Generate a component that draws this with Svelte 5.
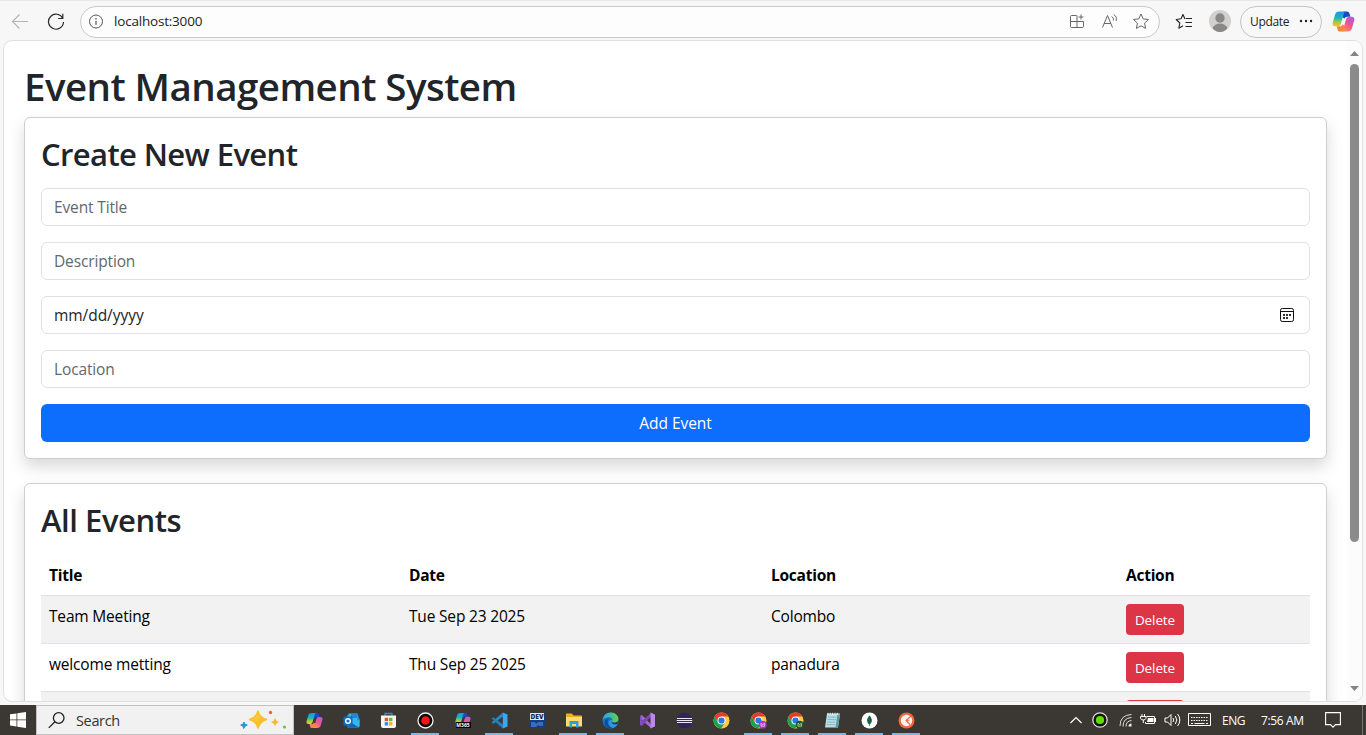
<script>
  const columns = ['Title', 'Date', 'Location', 'Action'];
  const events = [
    { title: 'Team Meeting', date: 'Tue Sep 23 2025', location: 'Colombo', action: 'Delete' },
    { title: 'welcome metting', date: 'Thu Sep 25 2025', location: 'panadura', action: 'Delete' },
    { title: '', date: '', location: '', action: '' }
  ];
  const apps = [
    { icon: 'copilot' }, { icon: 'outlook' }, { icon: 'store' },
    { icon: 'record', open: true }, { icon: 'm365' }, { icon: 'vscode', open: true },
    { icon: 'dev' }, { icon: 'folder', open: true }, { icon: 'edge', open: true },
    { icon: 'vs' }, { icon: 'eclipse' }, { icon: 'chrome' },
    { icon: 'chrome', badge: '#a63cc4', open: true }, { icon: 'chrome', badge: '#1d5c1f', open: true },
    { icon: 'notepad', open: true }, { icon: 'mongo', open: true }, { icon: 'postman', open: true }
  ];
</script>

{#snippet copilot(size)}
  <svg width={size} height={size} viewBox="0 0 24 24">
    <path d="M12 1.500h3.500c1.600 0 2.300.8 2.700 2.200l1 3.300h-3.400c-1.500 0-2.300.7-2.800 2.200L10.500 7Z" fill="#1b48c8" />
    <path d="M12 22.500H8.500c-1.600 0-2.300-.8-2.700-2.200l-1-3.300h3.400c1.500 0 2.300-.7 2.800-2.200l2.500 2.200Z" fill="#f8853d" />
    <path d="M7.700 1.500h6.800c-1.200.3-1.800 1.200-2.200 2.500L9.500 13.800C8.800 16.200 7.800 17 6 17H3.500C.9 17 .2 15 .9 12.700l2.300-7.800C3.900 2.600 5.300 1.500 7.700 1.500Z" fill="url(#cpA)" />
    <path d="M16.300 22.500H9.500c1.200-.3 1.800-1.200 2.200-2.500l2.800-9.800C15.200 7.800 16.200 7 18 7h2.500c2.600 0 3.300 2 2.600 4.300l-2.300 7.800c-.7 2.300-2.100 3.400-4.500 3.400Z" fill="url(#cpB)" />
  </svg>
{/snippet}

{#snippet appIcon(name, badge)}
  {#if name === 'copilot'}
    {@render copilot(17)}
  {:else if name === 'outlook'}
    <svg width="17" height="17" viewBox="0 0 17 17">
      <path d="M4 3h11l1.500 4v7.500H4Z" fill="#1490df" />
      <path d="M5.500 1.500h9V9l-4.500 3-4.500-3Z" fill="#3ab4ee" />
      <path d="M8 1.500h6.500V6H8Z" fill="#1f86d4" />
      <path d="m4 15 12.500-7.500V14q0 1.500-1.500 1.500H5Z" fill="#35b8f1" />
      <path d="m4 8 12 7.500H5Z" fill="#1066b5" />
      <rect x=".5" y="4.500" width="9" height="9" rx="1" fill="#0f6cbd" />
      <circle cx="5" cy="9" r="2.300" fill="none" stroke="#fff" stroke-width="1.400" />
    </svg>
  {:else if name === 'store'}
    <svg width="17" height="17" viewBox="0 0 17 17">
      <path d="M5 4V1.500h7V4" fill="none" stroke="#2a91cc" stroke-width="1.300" />
      <path d="M1 3.500h15v10.500q0 2-2 2H3q-2 0-2-2Z" fill="#f6f6f6" />
      <path d="M4.700 5.800h3.400v3.400H4.700Z" fill="#e8502e" /><path d="M9 5.800h3.400v3.400H9Z" fill="#78b52c" />
      <path d="M4.700 10.100h3.400v3.400H4.700Z" fill="#1e9be0" /><path d="M9 10.100h3.400v3.400H9Z" fill="#f5b51b" />
    </svg>
  {:else if name === 'record'}
    <svg width="17" height="17" viewBox="0 0 17 17">
      <circle cx="8.500" cy="8.500" r="7.500" fill="#080808" stroke="#f2f2f2" stroke-width="1.300" />
      <circle cx="8.500" cy="8.500" r="4.300" fill="#f5141a" />
    </svg>
  {:else if name === 'm365'}
    <span class="m365">
      {@render copilot(16)}
      <b>M365</b>
    </span>
  {:else if name === 'vscode'}
    <svg width="17" height="17" viewBox="0 0 17 17">
      <path d="M12 4.500 2.500 11.800 .5 10.500 11.800.5Z" fill="#2489ca" />
      <path d="M12 12.500 2.500 5.200 .5 6.500l11.300 10Z" fill="#1b80c4" />
      <path d="m11.800.5 4.700 2v12l-4.700 2Z" fill="#3aa7ef" />
    </svg>
  {:else if name === 'dev'}
    <svg width="16" height="17" viewBox="0 0 16 17">
      <path d="M0 1h16v15H0Z" fill="#193d7c" />
      <path d="M1 1h14v7H1Z" fill="#dce8f5" />
      <text x="8" y="7.300" text-anchor="middle" font-size="7" font-weight="900" textLength="13" lengthAdjust="spacingAndGlyphs" fill="#1c2d52">DEV</text>
      <path d="M2 10h4l1 2 2-2h5v4h-3l-2-1-2 2H2Z" fill="#386bc2" />
    </svg>
  {:else if name === 'folder'}
    <svg width="18" height="17" viewBox="0 0 18 17">
      <path d="M1 1.500h6l1.500 2H16q1 0 1 1V14H1Z" fill="#f2ad28" />
      <path d="M1 5h16v9.500H1Z" fill="#ffd976" />
      <path d="M4.500 15.500V9h9v6.500H11v-3.500H7v3.500Z" fill="#399bd3" />
    </svg>
  {:else if name === 'edge'}
    <svg width="17" height="17" viewBox="0 0 17 17">
      <circle cx="8.500" cy="8.500" r="8" fill="#1279c8" />
      <path d="M.6 8C1 3.500 4.500.5 8.700.5c5 0 8 3.500 7.700 6.800-.3 2.600-2.600 3.500-4.800 3.300-1.700-.1-1.900-.8-1.300-1.700.8-1.700-.8-3.700-3.300-3.700C4 5.200 1.700 6 .6 8Z" fill="url(#edgeA)" />
      <path d="M7.300 6.500c-3 2.500-2 7.500 3.700 9.600C6 17.400 2 14.300 2.500 10 2.800 7.700 4.500 6.200 7.300 6.500Z" fill="#0d4f9c" />
      <path d="M10.400 9.300c-1.400 2 2 4 5.300 2.400-1 2-2.700 3.500-4.700 4.400-4.500-1.500-5.800-6-2.500-8 1.200-.3 2 .3 1.900 1.200Z" fill="#2b99df" />
      <path d="M10.300 8.900c-.6 1 0 1.700 1.300 1.700 1.900.2 3.300-.4 4.100-1.400v2.500c-3.200 1.600-7.100.1-5.400-2.800Z" fill="#39352f" />
    </svg>
  {:else if name === 'vs'}
    <svg width="17" height="17" viewBox="0 0 17 17">
      <path d="m1 4 2-1 9 9.500V16L1 6.500Z" fill="#a36bd8" />
      <path d="m1 13 2 1 9-9.500V1L1 10.500Z" fill="#7d45b6" />
      <path d="M1 4h1.800v9.500L1 13Z" fill="#8552be" />
      <path d="m11.500.5 4.500 2v12l-4.500 2Z" fill="#bd86ea" />
    </svg>
  {:else if name === 'eclipse'}
    <svg width="17" height="17" viewBox="0 0 17 17">
      <circle cx="8.500" cy="8.500" r="7.800" fill="#30245c" />
      <path d="M1 6.500h15M.7 8.500h15.600M1 10.500h15" stroke="#ecebf5" stroke-width="1" />
    </svg>
  {:else if name === 'chrome'}
    <svg width="17" height="17" viewBox="0 0 17 17">
      <circle cx="8.500" cy="8.500" r="8" fill="#ffcd40" />
      <path d="M8.500 4.500h7A8 8 0 0 0 1.600 4.500L5 10.500Z" fill="#e33b2e" />
      <path d="M1.600 4.500A8 8 0 0 0 8.200 16.500L12 10.500 5 10.500Z" fill="#1ea052" />
      <circle cx="8.500" cy="8.500" r="4" fill="#fff" />
      <circle cx="8.500" cy="8.500" r="3.100" fill="#2878e8" />
      {#if badge}
        <circle cx="12.700" cy="12.700" r="3.900" fill={badge} />
        <path d="M11 14.200v-3l1.700 1.500 1.700-1.500v3Z" fill="none" stroke="#fff" stroke-opacity=".75" stroke-width=".8" />
      {/if}
    </svg>
  {:else if name === 'notepad'}
    <svg width="17" height="17" viewBox="0 0 17 17">
      <path d="M3 1.500h13l-2 14H1Z" fill="#b9dee6" />
      <path d="M13.500 2.500H16l-2 13h-2.500Z" fill="#5b9aa8" />
      <path d="m4 5 8.500.2M3.700 7.500l8.500.2M3.300 10l8.500.2M3 12.500l8.500.2" stroke="#77afbd" stroke-width=".8" />
      <path d="M4 .8v2M6.300.8v2M8.600.8v2M11 .8v2M13.300.8v2" stroke="#e9f2f3" />
    </svg>
  {:else if name === 'mongo'}
    <svg width="17" height="17" viewBox="0 0 17 17">
      <circle cx="8.500" cy="8.500" r="8" fill="#fff" />
      <path d="M8.500 3.500c3.200 3.500 3.200 6.500 0 9.500-3.200-3-3.200-6 0-9.500ZM8.200 12h.7v2h-.7Z" fill="#176149" />
    </svg>
  {:else}
    <svg width="17" height="17" viewBox="0 0 17 17">
      <circle cx="8.500" cy="8.500" r="8" fill="#ee6841" />
      <circle cx="8.500" cy="8.500" r="5.700" fill="#fff4ee" />
      <path d="m13 4-5 4.500 4 4M8 8.500l3.500-.2" fill="none" stroke="#ee6841" stroke-width="1.100" />
    </svg>
  {/if}
{/snippet}

<svg class="defs" width="0" height="0">
  <defs>
    <linearGradient id="cpA" x1="0" y1="0" x2="0" y2="1">
      <stop offset="0" stop-color="#1597e8" /><stop offset=".45" stop-color="#20b5b8" />
      <stop offset=".7" stop-color="#9bcb45" /><stop offset="1" stop-color="#ffc229" />
    </linearGradient>
    <linearGradient id="cpB" x1="1" y1="0" x2=".2" y2="1">
      <stop offset="0" stop-color="#9b62ef" /><stop offset=".5" stop-color="#ee5295" /><stop offset="1" stop-color="#ff9248" />
    </linearGradient>
    <linearGradient id="edgeA" x1="0" y1="0" x2="1" y2="0">
      <stop offset="0" stop-color="#28a5e7" /><stop offset="1" stop-color="#5ed44b" />
    </linearGradient>
    <linearGradient id="spark" x1="0" y1="0" x2="1" y2="1">
      <stop offset="0" stop-color="#ffdb55" /><stop offset="1" stop-color="#f5ac13" />
    </linearGradient>
  </defs>
</svg>

<div class="screen">
  <header class="toolbar">
    <svg class="back" width="18" height="18" viewBox="0 0 18 18" fill="none" stroke="#b4b4b4" stroke-width="1.100"><path d="M17 8.500H1.500M8.500 1.500l-7 7 7 7" /></svg>
    <svg class="reload" width="18" height="18" viewBox="0 0 18 18" fill="none" stroke="#2b2b2b" stroke-width="1.200"><path d="M15.800 5.500A7.500 7.500 0 1 0 16.500 9M15.800.8v4.700h-4.700" /></svg>
    <div class="address">
      <svg width="16" height="16" viewBox="0 0 16 16" fill="none" stroke="#555"><circle cx="8" cy="7.500" r="6.500" /><path d="M8 6.700v4M8 4.100v1.300" stroke-width="1.200" /></svg>
      <span class="url">localhost:3000</span>
      <svg class="a1" width="16" height="16" viewBox="0 0 16 16" fill="none" stroke="#666"><path d="M7.500 1.500h-5q-1 0-1 1v10q0 1 1 1h11q1 0 1-1v-5h-13M8 1.500v12M12 .5v5M9.500 3h5" /></svg>
      <svg class="a2" width="18" height="16" viewBox="0 0 18 16" fill="none" stroke="#666"><path d="m2.500 13.500 5-12 5 12M4.200 9.500h6.600M11.800 2.500q2 1.300 1.700 4M13.700.5q3.500 2 2.500 6.500" /></svg>
      <svg class="a3" width="18" height="18" viewBox="0 0 18 18" fill="none" stroke="#666" stroke-linejoin="round"><path d="m9 1 2.200 4.900 5.300.6-3.900 3.600 1 5.300L9 12.800l-4.600 2.600 1-5.300L1.500 6.500l5.300-.6Z" /></svg>
    </div>
    <svg class="fav" width="18" height="18" viewBox="0 0 18 18" fill="none" stroke="#242424" stroke-width="1.100" stroke-linejoin="round"><path d="M10.500 5.500H9.700L8 1.500 6 5.800 1.200 6.500l3.600 3.500-.9 5.200L8 12.800M11 5.500h6M10.500 9.500H17M10.500 13.500H17" /></svg>
    <svg class="avatar" width="22" height="22" viewBox="0 0 22 22"><circle cx="11" cy="11" r="11" fill="#d2d0ce" /><circle cx="11" cy="8" r="4.700" fill="#8a8886" /><path d="M3.500 18q2.500-4.500 7.500-4.500t7.500 4.500q-3 4-7.500 4t-7.500-4Z" fill="#8a8886" /></svg>
    <button class="update">Update <svg width="14" height="4" viewBox="0 0 14 4" fill="#222"><circle cx="2" cy="2" r="1.200" /><circle cx="7" cy="2" r="1.200" /><circle cx="12" cy="2" r="1.200" /></svg></button>
    <span class="pilot">{@render copilot(23)}</span>
  </header>

  <div class="viewport">
    <main>
      <h1>Event Management System</h1>
      <section class="card form">
        <h2>Create New Event</h2>
        <input placeholder="Event Title" />
        <input placeholder="Description" />
        <div class="date">
          <span>mm/dd/yyyy</span>
          <svg width="16" height="16" viewBox="0 0 16 16"><rect x="1.500" y="1.500" width="13" height="13" rx="1.800" fill="none" stroke="#111" stroke-width="1" /><path d="M1.500 4.500h13" stroke="#111" stroke-width="1" /><path d="M4 7h2v2H4zM7 7h2v2H7zM10 7h2v2h-2zM4 10h2v2H4zM7 10h2v2H7z" fill="#333" /></svg>
        </div>
        <input placeholder="Location" />
        <button class="add">Add Event</button>
      </section>
      <section class="card list">
        <h2>All Events</h2>
        <div class="row head">
          {#each columns as c}<span>{c}</span>{/each}
        </div>
        {#each events as e, i}
          <div class="row" class:odd={i % 2 === 0}>
            <span>{e.title}</span><span>{e.date}</span><span>{e.location}</span>
            <span><button class="delete">{e.action}</button></span>
          </div>
        {/each}
      </section>
    </main>
    <div class="scrollbar">
      <svg width="9" height="5" viewBox="0 0 9 5"><path d="M0 5 4.500 0 9 5Z" fill="#858585" /></svg>
      <i></i>
      <svg class="down" width="9" height="5" viewBox="0 0 9 5"><path d="M0 0 4.500 5 9 0Z" fill="#858585" /></svg>
    </div>
  </div>

  <footer>
    <div class="start"><svg width="16" height="16" viewBox="0 0 16 16" fill="#fff"><path d="m0 2.300 6.500-.9v6.100H0ZM7.300 1.300 16 0v7.500H7.300ZM0 8.300h6.500v6.200L0 13.600ZM7.300 8.300H16V16l-8.700-1.300Z" /></svg></div>
    <div class="search">
      <svg width="17" height="17" viewBox="0 0 17 17" fill="none" stroke="#222" stroke-width="1.300"><circle cx="10.700" cy="6" r="5.300" /><path d="M6.900 9.800.8 15.900" /></svg>
      <span>Search</span>
      <svg class="sparkles" width="48" height="20" viewBox="0 0 48 20">
        <path d="M18 1q1.500 6.500 8.500 8.500Q19.500 11.500 18 18q-1.500-6.500-8.500-8.500Q16.500 7.500 18 1Z" fill="url(#spark)" stroke="#f9c029" stroke-width="1.500" stroke-linejoin="round" />
        <path d="M35 8q.8 3.200 4 4-3.200.8-4 4-.8-3.200-4-4 3.200-.8 4-4Z" fill="#f8b62a" />
        <path d="m4 12 1 2.300 2.300.7L5 16.300 3.700 18.500 3 16.200.7 15 3 14.200Z" fill="#2494d8" stroke="#2494d8" />
        <circle cx="30.500" cy="2.500" r="1.700" fill="#e7663d" /><circle cx="44.500" cy="17" r="1.600" fill="#74bd4b" />
      </svg>
    </div>
    <div class="apps">
      {#each apps as a}
        <div class="app" class:open={a.open}>{@render appIcon(a.icon, a.badge)}</div>
      {/each}
    </div>
    <div class="tray">
      <svg width="14" height="14" viewBox="0 0 14 14" fill="none" stroke="#fff" stroke-width="1.200"><path d="m1.500 10 5.500-5.500 5.500 5.500" /></svg>
      <svg width="16" height="16" viewBox="0 0 16 16"><circle cx="8" cy="8" r="7.200" fill="#101510" stroke="#ddd" stroke-width="1.300" /><circle cx="8" cy="8" r="4.100" fill="#63dc00" /></svg>
      <svg class="wifi" width="14" height="14" viewBox="0 0 14 14" fill="none" stroke="#ddd"><path d="M1 13Q1 2 12.500 1.500M4 13.500Q4 5 12.500 4.500M7 13.500Q7 8 12.500 7.500" /><path d="M9.500 13.500q0-3 3-3v3Z" fill="#eee" stroke="none" /></svg>
      <svg class="battery" width="17" height="12" viewBox="0 0 17 12" fill="none" stroke="#fff"><path d="M6.500 2.500h8v7h-9V8M15.500 4v4" /><path d="M8 4h5.500v4H7Z" fill="#fff" stroke="none" /><path d="M2 0v2M4.500 0v2M.5 2.500H6v1.800Q5.500 6 3.300 6 1 6 .5 4.300ZM3.300 6v3" /></svg>
      <svg class="sound" width="17" height="14" viewBox="0 0 17 14" fill="none" stroke="#fff"><path d="M1 5h2.500L7 1.500v11L3.500 9H1ZM9 5q1.500 2 0 4M11.300 3q3 4 0 8M13.600 1q4.500 6 0 12" /></svg>
      <svg class="keyboard" width="23" height="14" viewBox="0 0 23 14" fill="none" stroke="#fff"><path d="M.5.500h22v12H.5Z" /><path d="M3 4.500h17M3 7.500h17" stroke-dasharray="1.500 1" /><path d="M3 10.500h2M6.500 10.500h10M18 10.500h2" /></svg>
      <span class="lang">ENG</span>
      <span class="clock">7:56 AM</span>
      <svg class="notice" width="16" height="16" viewBox="0 0 16 16" fill="none" stroke="#fff" stroke-width="1.100"><path d="M.6.600h14.800v12H10.500L8 15.200 5.500 12.600H.6Z" /></svg>
      <i></i>
    </div>
  </footer>
</div>

<style>
  :global(body) { margin: 0; overflow: hidden; }
  * { box-sizing: border-box; }
  .defs { position: absolute; }
  svg { display: block; flex: none; }
  .screen { width: 1366px; height: 735px; display: flex; flex-direction: column; background: #f7f7f7; font-family: "Open Sans", "Noto Sans", sans-serif; overflow: hidden; }
  button, input { font-family: inherit; }

  .toolbar { height: 40px; flex: none; display: flex; align-items: center; padding: 2px 10px 0 11px; border-top: 1px solid #e8e8e8; color: #222; }
  .reload { margin-left: 18px; }
  .address { width: 1080px; height: 32px; margin-left: 15px; border: 1px solid #c9c9c9; border-radius: 16px; background: #fdfdfd; display: flex; align-items: center; padding: 0 9px 0 7px; }
  .url { margin-left: 10px; margin-top: -2px; font-size: 13.500px; letter-spacing: -.2px; }
  .a1 { margin-left: auto; }
  .a2 { margin-left: 15px; }
  .a3 { margin-left: 14px; }
  .fav { margin-left: 15px; }
  .avatar { margin-left: 16px; margin-top: -2px; }
  .update { width: 82px; height: 32px; margin-left: 9px; border: 1px solid #c4c4c4; border-radius: 16px; background: #f8f8f8; display: flex; align-items: center; justify-content: space-between; padding: 0 8px 1px 9px; font-size: 12px; letter-spacing: -.35px; color: #222; }
  .pilot { margin-left: 10px; margin-top: -1px; }

  .viewport { width: 1360px; height: 662px; flex: none; margin-left: 3px; border: 1px solid #e0e0e0; border-radius: 9px; background: #fff; display: flex; overflow: hidden; }
  main { flex: 1; padding: 20px 20px 0; min-width: 0; }
  h1, h2 { margin: 0; font-weight: 600; color: #212529; }
  h1 { height: 48px; font-size: 38.500px; line-height: 48px; padding-top: 1px; letter-spacing: -.55px; margin-bottom: 8px; }
  h2 { height: 39px; font-size: 31px; line-height: 38px; padding-top: 1px; letter-spacing: -.62px; margin-bottom: 15.400px; }
  .list h2 { letter-spacing: -.45px; margin-bottom: 16.400px; }
  .card { border: 1px solid #cfcfd0; border-radius: 6px; background: #fff; padding: 16px; box-shadow: 0 8px 16px rgba(0, 0, 0, .15); }
  .form { height: 342px; }
  .list { margin-top: 24px; height: 400px; }
  input, .date { display: flex; align-items: center; width: 100%; height: 38px; margin: 0 0 16px; padding: 0 12px 1px; border: 1px solid #dee2e6; border-radius: 6px; background: #fff; font-size: 15.500px; letter-spacing: -.14px; color: #212529; }
  input::placeholder { color: #63686d; opacity: 1; }
  .date { justify-content: space-between; padding-right: 14px; letter-spacing: -.05px; }
  .add { display: block; width: 100%; height: 38px; border: 0; border-radius: 6px; padding: 0; background: #0d6efd; color: #fff; font-size: 15.500px; letter-spacing: -.05px; }
  .row { display: grid; grid-template-columns: 360px 362px 355px 1fr; height: 48px; padding-left: 8px; padding-top: 8px; border-bottom: 1px solid #dee2e6; font-size: 15.500px; line-height: 25px; letter-spacing: -.18px; color: #000; }
  .head { height: 41px; font-weight: 700; letter-spacing: -.25px; }
  .odd { background: #f2f2f2; }
  .delete { display: block; width: 58px; height: 31px; border: 0; border-radius: 4px; padding: 0; background: #dc3545; color: #fff; font-size: 13.500px; letter-spacing: -.1px; }
  .scrollbar { width: 15px; flex: none; background: #fcfcfc; display: flex; flex-direction: column; align-items: center; padding: 10px 0 10px; }
  .scrollbar i { width: 9px; height: 478px; margin-top: 8px; border-radius: 5px; background: #8b8b8b; }
  .down { margin-top: auto; }

  footer { height: 30px; flex: none; margin-top: 3px; background: #3b3833; display: flex; align-items: stretch; color: #fff; }
  .start { width: 36px; display: flex; align-items: center; justify-content: center; }
  .search { width: 258px; background: #f1f1f1; border: 1px solid #c2c2c2; display: flex; align-items: center; padding: 0 5px 0 11px; color: #333; font-size: 14.500px; letter-spacing: -.35px; }
  .search span { margin-left: 11px; }
  .sparkles { margin-left: auto; }
  .apps { display: flex; margin-left: 2px; }
  .app { width: 37px; display: flex; align-items: center; justify-content: center; position: relative; }
  .app.open::after { content: ""; position: absolute; left: 4px; bottom: 0; width: 28px; height: 2px; background: #75b8eb; }
  .m365 { position: relative; display: block; }
  .m365 b { position: absolute; left: 1px; bottom: 0; width: 15px; height: 6px; background: #000; color: #fff; font-size: 5px; line-height: 6px; text-align: center; }
  .tray { display: flex; align-items: center; margin-left: auto; font-size: 12px; }
  .tray svg + svg { margin-left: 9px; }
  .tray .wifi { margin-left: 11px; }
  .tray .battery { margin-left: 7px; }
  .tray .sound { margin-left: 7px; }
  .tray .keyboard { margin-left: 7px; }
  .lang { margin-left: 11px; width: 24px; letter-spacing: -.5px; }
  .clock { margin-left: 15px; width: 44px; letter-spacing: -.35px; white-space: nowrap; }
  .notice { margin-left: 20px; }
  .tray i { width: 1px; height: 30px; margin: 0 3px 0 21px; background: #77746f; }
</style>
